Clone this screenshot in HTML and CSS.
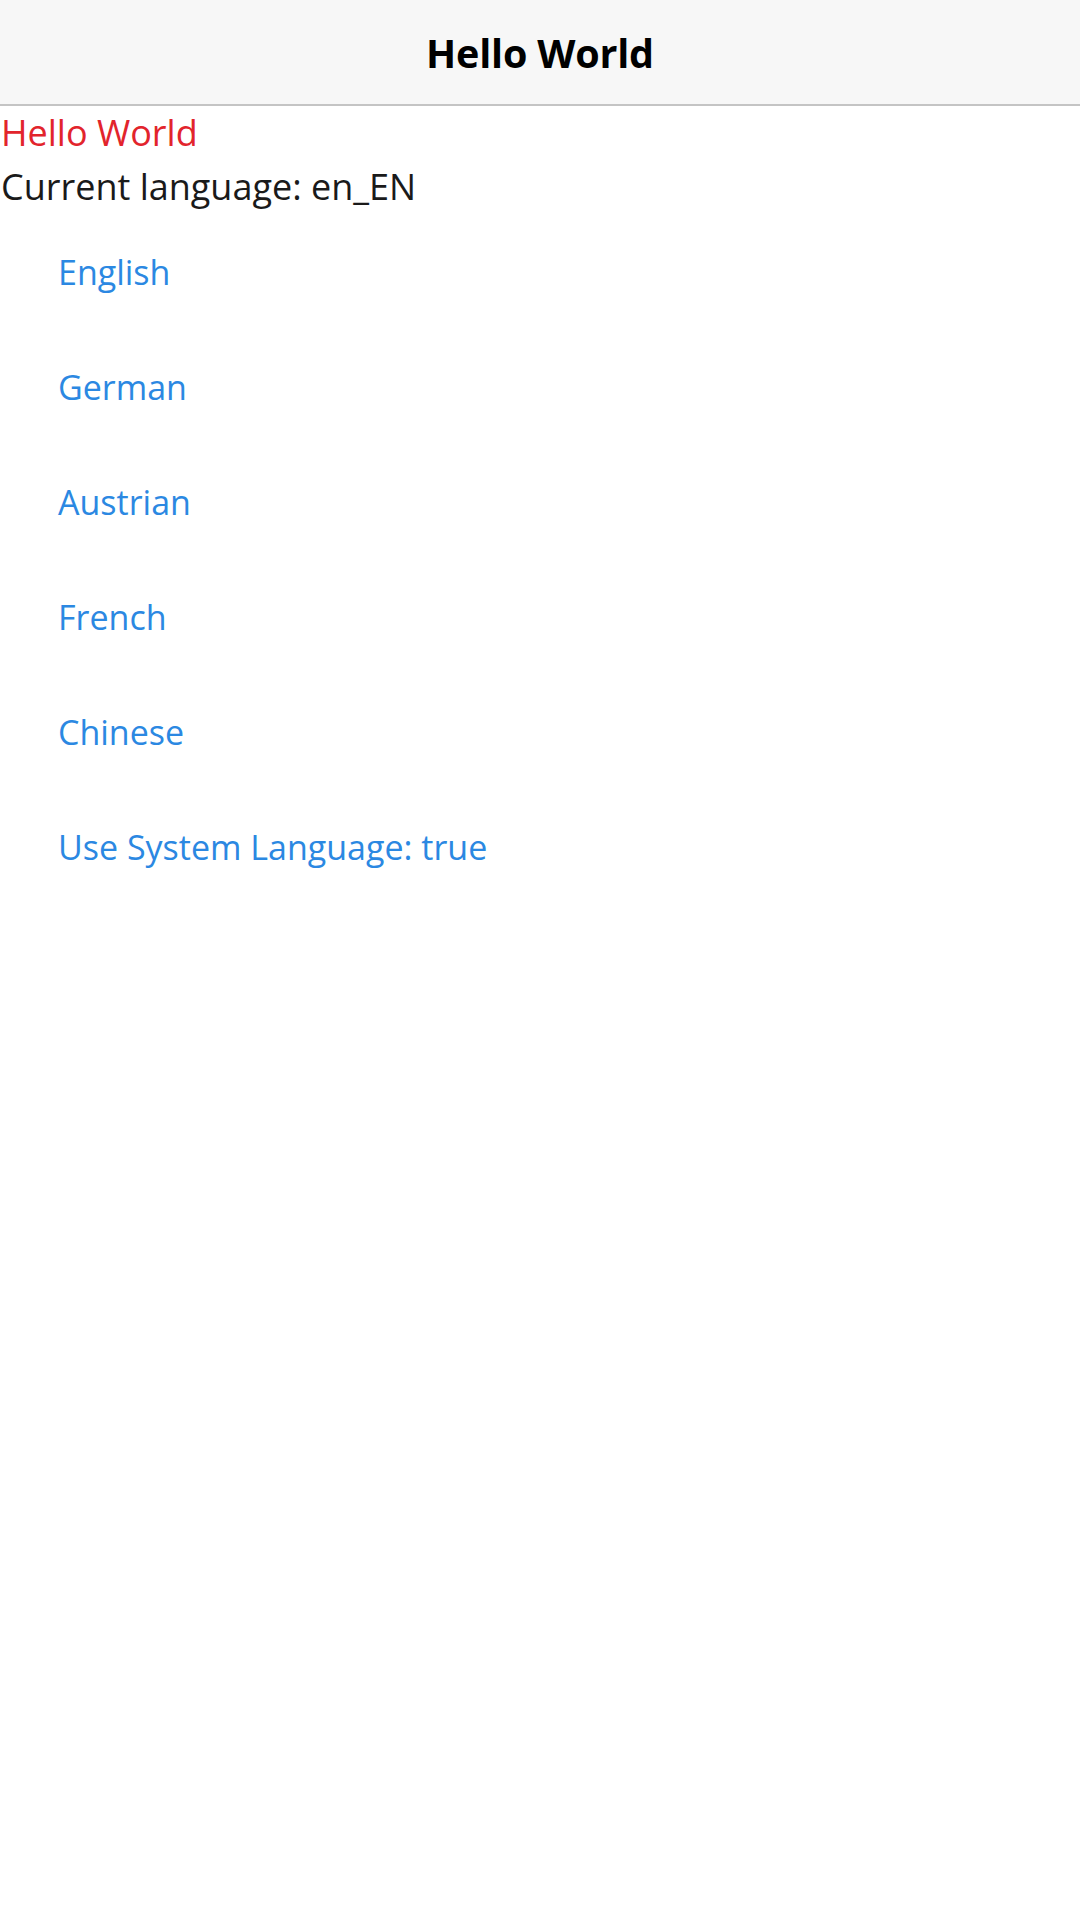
FILE: index.html
```html
<!DOCTYPE html>
<html lang="en">
<head>
<meta charset="utf-8">
<title>Hello World</title>
<link rel="stylesheet" href="styles.css">
</head>
<body>
  <header class="nav-bar">
    <h1 class="nav-title">Hello World</h1>
  </header>
  <main class="content">
    <div class="label label-red">Hello World</div>
    <div class="label">Current language: en_EN</div>
    <div class="buttons">
      <button class="lang-btn">English</button>
      <button class="lang-btn">German</button>
      <button class="lang-btn">Austrian</button>
      <button class="lang-btn">French</button>
      <button class="lang-btn">Chinese</button>
      <button class="lang-btn">Use System Language: true</button>
    </div>
  </main>
</body>
</html>
```

FILE: styles.css
```css
html, body {
  margin: 0;
  padding: 0;
  background: #ffffff;
  font-family: "Open Sans", "Noto Sans", "Liberation Sans", sans-serif;
}

.nav-bar {
  height: 104px;
  background: #f7f7f7;
  border-bottom: 2px solid #c4c4c4;
  display: flex;
  align-items: center;
  justify-content: center;
}

.nav-title {
  margin: 2px 0 0 0;
  font-size: 39.5px;
  font-weight: 700;
  color: #000000;
  letter-spacing: -0.2px;
}

.content {
  display: flex;
  flex-direction: column;
}

.label {
  font-size: 36px;
  line-height: 54px;
  color: #1a1a1a;
  padding-left: 1px;
}

.label-red {
  color: #e2242c;
}

.buttons {
  display: flex;
  flex-direction: column;
}

.lang-btn {
  height: 115px;
  padding: 0 0 0 58px;
  margin: 0;
  border: none;
  background: transparent;
  font-family: inherit;
  font-size: 34px;
  color: #2b88e2;
  text-align: left;
  display: flex;
  align-items: center;
}
```
